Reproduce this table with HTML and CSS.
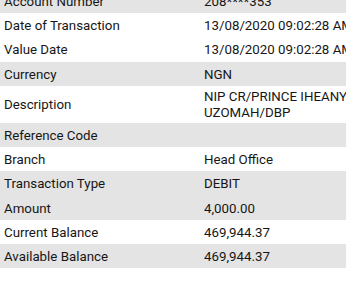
FILE: index.html
```html
<!DOCTYPE html>
<html>
<head>
<meta charset="utf-8">
<link rel="stylesheet" href="styles.css">
</head>
<body>
<div class="details">
  <div class="row shade"><div class="label">Account Number</div><div class="value">208****353</div></div>
  <div class="row"><div class="label">Date of Transaction</div><div class="value">13/08/2020 09:02:28 AM</div></div>
  <div class="row"><div class="label">Value Date</div><div class="value">13/08/2020 09:02:28 AM</div></div>
  <div class="row shade"><div class="label">Currency</div><div class="value">NGN</div></div>
  <div class="row tall"><div class="label">Description</div><div class="value">NIP CR/PRINCE IHEANYI UZOMAH/DBP</div></div>
  <div class="row shade"><div class="label">Reference Code</div><div class="value"></div></div>
  <div class="row"><div class="label">Branch</div><div class="value">Head Office</div></div>
  <div class="row shade"><div class="label">Transaction Type</div><div class="value">DEBIT</div></div>
  <div class="row shade"><div class="label">Amount</div><div class="value">4,000.00</div></div>
  <div class="row"><div class="label">Current Balance</div><div class="value">469,944.37</div></div>
  <div class="row shade"><div class="label">Available Balance</div><div class="value">469,944.37</div></div>
</div>
</body>
</html>
```

FILE: styles.css
```css
html, body {
  margin: 0;
  padding: 0;
  overflow: hidden;
  background: #ffffff;
}
body {
  width: 346px;
  height: 284px;
  font-family: Roboto, "Liberation Sans", sans-serif;
  font-size: 13.3px;
  color: #161616;
}
.details {
  margin-top: -11.25px;
  width: 400px;
}
.row {
  display: grid;
  grid-template-columns: 200px 170px;
  align-items: center;
  min-height: 24.25px;
  box-sizing: border-box;
  padding: 2px 0 0 0;
  line-height: 16px;
}
.row.tall {
  min-height: 37px;
}
.row.shade {
  background: #e4e4e4;
}
.label, .value {
  padding-left: 4px;
  white-space: normal;
}
```
